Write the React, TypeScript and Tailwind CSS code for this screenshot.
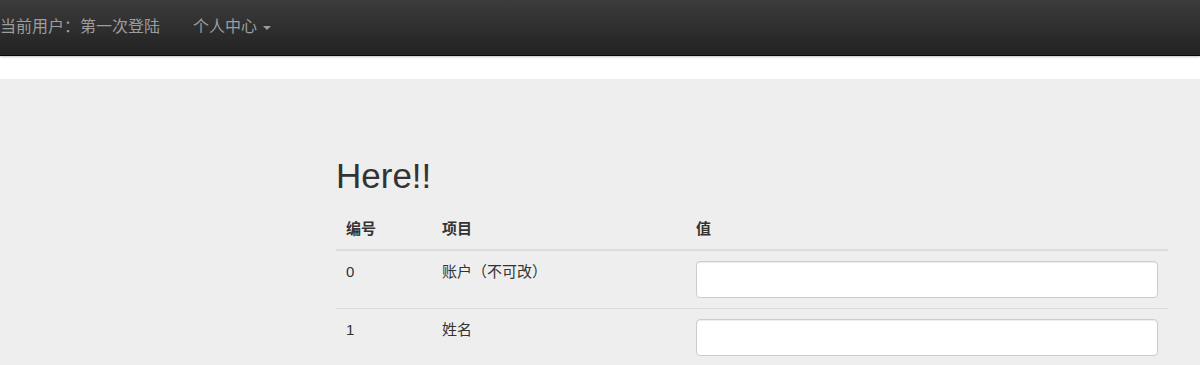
import React from 'react';

const font = { fontFamily: '"Liberation Sans", "Noto Sans CJK SC", sans-serif' };

const rows = [
  { id: '0', name: '账户（不可改）' },
  { id: '1', name: '姓名' },
];

export default function App() {
  return (
    <div className="w-[1200px] h-[365px] overflow-hidden bg-white text-[#333]" style={font}>
      <nav className="h-[56px] bg-gradient-to-b from-[#3c3c3c] to-[#222] border-b border-[#080808] shadow-[0_1px_2px_rgba(0,0,0,0.25)] flex items-center text-[16px] leading-[20px] text-[#9d9d9d]">
        <span className="pb-[2px]">当前用户：第一次登陆</span>
        <span className="ml-[33px] pb-[2px] flex items-center">
          个人中心
          <span className="ml-[6px] mt-[2px] w-0 h-0 border-x-[4px] border-x-transparent border-t-[4px] border-t-[#9d9d9d]"></span>
        </span>
      </nav>
      <div className="h-[23px]"></div>
      <div className="bg-[#eee] h-[300px] pt-[77px] pl-[336px] pr-[32px]">
        <h1 className="text-[35px] leading-[40px] font-normal">Here!!</h1>
        <table className="mt-[13px] w-[832px] text-[15px] leading-[20px] border-collapse">
          <thead>
            <tr className="border-b-2 border-[#ddd]">
              <th className="w-[98px] text-left font-bold pl-[10px] pr-[8px] pt-[10px] pb-[10px]">编号</th>
              <th className="w-[254px] text-left font-bold px-[8px] pt-[10px] pb-[10px]">项目</th>
              <th className="text-left font-bold px-[8px] pt-[10px] pb-[10px]">值</th>
            </tr>
          </thead>
          <tbody>
            {rows.map((r) => (
              <tr key={r.id} className="border-b border-[#ddd] align-top">
                <td className="pl-[10px] pr-[8px] pt-[11px]">{r.id}</td>
                <td className="px-[8px] pt-[11px]">{r.name}</td>
                <td className="pl-[8px] pr-[10px] py-[10px]">
                  <input
                    type="text"
                    className="block w-full h-[37px] bg-white border border-[#ccc] rounded-[4px] shadow-[inset_0_1px_1px_rgba(0,0,0,0.075)] px-3 outline-none"
                  />
                </td>
              </tr>
            ))}
          </tbody>
        </table>
      </div>
    </div>
  );
}
